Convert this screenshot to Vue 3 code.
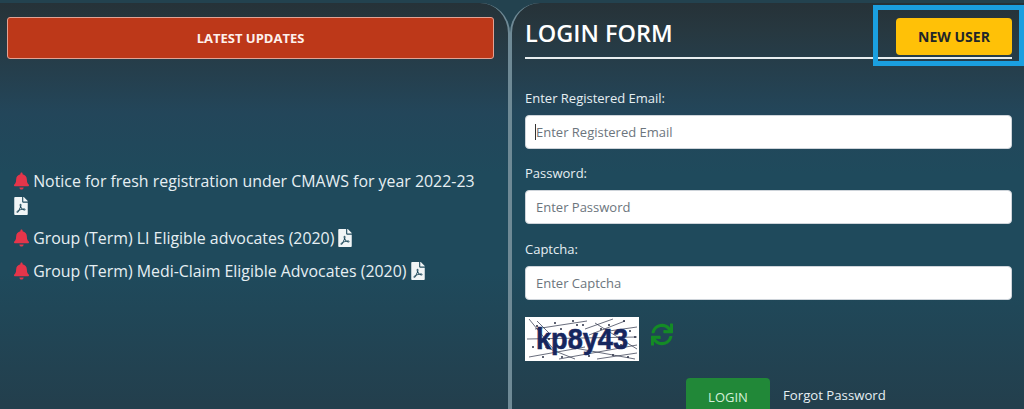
<script setup>
const notices = [
  { id: 1, text: 'Notice for fresh registration under CMAWS for year 2022-23' },
  { id: 2, text: 'Group (Term) LI Eligible advocates (2020)' },
  { id: 3, text: 'Group (Term) Medi-Claim Eligible Advocates (2020)' },
]

const fields = [
  { id: 'email', label: 'Enter Registered Email:', placeholder: 'Enter Registered Email', focus: true },
  { id: 'password', label: 'Password:', placeholder: 'Enter Password' },
  { id: 'captcha', label: 'Captcha:', placeholder: 'Enter Captcha' },
]

const noiseLines = [
  [4, 2, 30, 34], [10, 12, 62, 4], [60, 12, 88, 2], [64, 18, 100, 4], [70, 6, 112, 32],
  [2, 22, 112, 20], [4, 40, 60, 30], [34, 42, 112, 28], [44, 30, 110, 42], [72, 42, 112, 36],
  [20, 30, 50, 42], [84, 14, 112, 10], [12, 4, 24, 16],
]

const noiseDots = [
  [12, 9], [30, 6], [36, 12], [48, 4], [58, 8], [84, 8], [99, 4], [105, 14], [8, 30], [18, 40],
  [37, 40], [64, 39], [88, 38], [103, 40], [110, 20], [52, 8], [96, 28], [76, 12], [24, 22],
]
</script>

<template>
  <div class="page">
    <section class="panel panel-left">
      <h2 class="banner">LATEST UPDATES</h2>
      <ul class="notices">
        <li v-for="n in notices" :key="n.id">
          <svg class="bell" viewBox="0 0 448 512" aria-hidden="true"><path fill="#e5354a" d="M224 512c35.32 0 63.97-28.65 63.97-64H160.03c0 35.35 28.65 64 63.97 64zm215.39-149.71c-19.32-20.76-55.47-51.99-55.47-154.29 0-77.7-54.48-139.9-127.94-155.16V32c0-17.67-14.32-32-31.98-32s-31.98 14.33-31.98 32v20.84C118.56 68.1 64.08 130.3 64.08 208c0 102.3-36.15 133.53-55.47 154.29-6 6.45-8.66 14.16-8.61 21.71.11 16.4 12.98 32 32.1 32h383.8c19.12 0 32-15.6 32.1-32 .05-7.55-2.61-15.27-8.61-21.71z"/></svg>
          {{ n.text }}
          <svg class="pdf" viewBox="0 0 384 512" aria-hidden="true"><path fill="#f1f5f6" d="M181.9 256.1c-5-16-4.9-46.9-2-46.9 8.4 0 7.6 36.9 2 46.9zm-1.7 47.2c-7.7 20.2-17.3 43.3-28.4 62.7 18.3-7 39-17.2 62.9-21.9-12.7-9.6-24.9-23.4-34.5-40.8zM86.1 428.1c0 .8 13.2-5.4 34.9-40.2-6.7 6.3-29.1 24.5-34.9 40.2zM248 160h136v328c0 13.3-10.7 24-24 24H24c-13.3 0-24-10.7-24-24V24C0 10.7 10.7 0 24 0h200v136c0 13.2 10.8 24 24 24zm-8 171.8c-20-12.2-33.3-29-42.7-53.8 4.5-18.5 11.6-46.6 6.2-64.2-4.7-29.4-42.4-26.5-47.8-6.8-5 18.3-.4 44.1 8.1 77-11.6 27.6-28.7 64.6-40.8 85.8-.1 0-.1.1-.2.1-27.1 13.9-73.6 44.5-54.5 68 5.6 6.9 16 10 21.5 10 17.9 0 35.7-18 61.1-61.8 25.8-8.5 54.1-19.1 79-23.2 21.7 11.8 47.1 19.5 64 19.5 29.2 0 31.2-32 19.7-43.4-13.9-13.6-54.3-9.7-73.6-7.2zM377 105L279 7c-4.5-4.5-10.6-7-17-7h-6v128h128v-6.1c0-6.3-2.5-12.4-7-16.9zm-74.1 255.3c4.1-2.7-2.5-11.9-42.8-9 37.1 15.8 42.8 9 42.8 9z"/></svg>
        </li>
      </ul>
    </section>

    <section class="panel panel-right">
      <header class="form-head">
        <h1>LOGIN FORM</h1>
        <button class="new-user" type="button">NEW USER</button>
      </header>

      <form class="form" @submit.prevent>
        <div v-for="f in fields" :key="f.id" class="field">
          <label :for="f.id">{{ f.label }}</label>
          <div class="input-box">
            <span v-if="f.focus" class="caret"></span>
            <input :id="f.id" type="text" :placeholder="f.placeholder" />
          </div>
        </div>

        <div class="captcha-row">
          <svg class="captcha" viewBox="0 0 114 44" role="img" aria-label="captcha">
            <rect width="114" height="44" fill="#fff" />
            <line v-for="(l, i) in noiseLines" :key="i" :x1="l[0]" :y1="l[1]" :x2="l[2]" :y2="l[3]" stroke="#2a2f45" stroke-width="0.7" />
            <text x="11" y="32" textLength="92" lengthAdjust="spacingAndGlyphs" class="captcha-text">kp8y43</text>
            <circle v-for="(d, i) in noiseDots" :key="'d' + i" :cx="d[0]" :cy="d[1]" r="1" fill="#2a2f45" />
          </svg>
          <svg class="refresh" viewBox="0 0 512 512" aria-hidden="true"><path fill="#148a26" d="M440.65 12.57l4 82.77A247.16 247.16 0 0 0 255.83 8C134.73 8 33.91 94.92 12.29 209.82A12 12 0 0 0 24.09 224h49.05a12 12 0 0 0 11.67-9.26 175.91 175.91 0 0 1 317-56.94l-101.46-4.86a12 12 0 0 0-12.57 12v47.41a12 12 0 0 0 12 12H500a12 12 0 0 0 12-12V12a12 12 0 0 0-12-12h-47.37a12 12 0 0 0-11.98 12.57zM255.83 432a175.61 175.61 0 0 1-146-77.8l101.8 4.87a12 12 0 0 0 12.57-12v-47.4a12 12 0 0 0-12-12H12a12 12 0 0 0-12 12V500a12 12 0 0 0 12 12h47.35a12 12 0 0 0 12-12.6l-4.15-82.57A247.17 247.17 0 0 0 255.83 504c121.11 0 221.93-86.92 243.55-201.82a12 12 0 0 0-11.8-14.18h-49.05a12 12 0 0 0-11.67 9.26A175.86 175.86 0 0 1 255.83 432z"/></svg>
        </div>

        <div class="actions">
          <button class="login" type="submit">LOGIN</button>
          <a class="forgot">Forgot Password</a>
        </div>
      </form>

      <span class="highlight"></span>
    </section>
  </div>
</template>

<style>
html,
body {
  margin: 0;
  background: #22404e;
}
</style>

<style scoped>
.page {
  display: grid;
  grid-template-columns: 510px 514px;
  width: 1024px;
  height: 409px;
  padding-top: 3px;
  box-sizing: border-box;
  overflow: hidden;
  font-family: "Open Sans", "Noto Sans", sans-serif;
  color: #e6eff3;
  background: #23424f;
}

.panel {
  height: 406px;
  box-sizing: border-box;
  background: linear-gradient(180deg, #263238 0, #273840 28px, #23465a 110px, #1f4a5c 170px, #1f4a5c 270px, #233f4d 400px);
  position: relative;
}

.panel-left {
  padding: 14px 14px 0 7px;
  border-right: 2px solid #6f8a96;
  border-top-right-radius: 30px;
}

.panel-right {
  padding: 0 12px 0 13px;
  border-left: 2px solid #6f8a96;
  border-top-left-radius: 30px;
}

.banner {
  margin: 0;
  height: 42px;
  line-height: 40px;
  box-sizing: border-box;
  text-align: center;
  font-size: 13px;
  font-weight: 700;
  color: #fdf1ec;
  background: #bd3819;
  border: 1px solid #e3a294;
  border-radius: 3px;
}

.notices {
  list-style: none;
  margin: 109.5px 0 0;
  padding: 0 12px 0 7px;
  font-size: 15.9px;
  line-height: 25px;
}

.notices li {
  margin-bottom: 7.5px;
}

.bell {
  width: 15px;
  height: 18px;
  vertical-align: -3px;
}

.pdf {
  width: 14px;
  height: 18px;
  vertical-align: -3px;
}

.form-head {
  display: flex;
  align-items: flex-start;
  justify-content: space-between;
  height: 56px;
  padding-top: 15px;
  box-sizing: border-box;
  border-bottom: 2px solid #e8eef0;
}

.form-head h1 {
  margin: -1px 0 0;
  font-size: 23.5px;
  font-weight: 600;
  line-height: 32px;
  color: #fff;
}

.new-user {
  width: 116px;
  height: 37px;
  border: 0;
  border-radius: 4px;
  background: #ffc107;
  color: #212529;
  font: 700 14px "Open Sans", sans-serif;
}

.form {
  display: flex;
  flex-direction: column;
}

.field label {
  display: block;
  height: 21px;
  margin-top: 14px;
  margin-bottom: 6px;
  line-height: 21px;
  font-size: 13px;
}

.field:first-child label {
  margin-top: 29px;
}

.field:nth-child(3) label {
  margin-top: 15px;
}

.input-box {
  position: relative;
}

.caret {
  position: absolute;
  left: 10px;
  top: 9px;
  width: 1px;
  height: 16px;
  background: #333;
}

input {
  display: block;
  width: 100%;
  height: 34px;
  box-sizing: border-box;
  padding: 0 10px;
  border: 1px solid #ced4da;
  border-radius: 4px;
  background: #fff;
  font: 13px "Open Sans", sans-serif;
  outline: none;
}

input::placeholder {
  color: #6c757d;
  opacity: 1;
}

.captcha-row {
  display: flex;
  align-items: flex-start;
  gap: 12px;
  margin-top: 17px;
}

.captcha {
  width: 114px;
  height: 44px;
}

.captcha-text {
  font: 700 29px "Liberation Sans", sans-serif;
  fill: #16265e;
  stroke: #16265e;
  stroke-width: 0.6;
}

.refresh {
  width: 22px;
  height: 23px;
  margin-top: 6px;
}

.actions {
  display: flex;
  align-items: flex-start;
  gap: 13px;
  margin-top: 17px;
  margin-left: 161px;
}

.login {
  width: 84px;
  height: 31px;
  box-sizing: border-box;
  border: 0;
  border-radius: 4px 4px 0 0;
  background: #218838;
  color: #d5f0d9;
  font: 13px "Open Sans", sans-serif;
  padding: 7px 0 0;
}

.forgot {
  font-size: 13.2px;
  line-height: 35px;
  color: #e6eff3;
}

.highlight {
  position: absolute;
  left: 361px;
  top: 2px;
  width: 151px;
  height: 61px;
  box-sizing: border-box;
  border: 5px solid #1a9fe0;
  pointer-events: none;
}
</style>
